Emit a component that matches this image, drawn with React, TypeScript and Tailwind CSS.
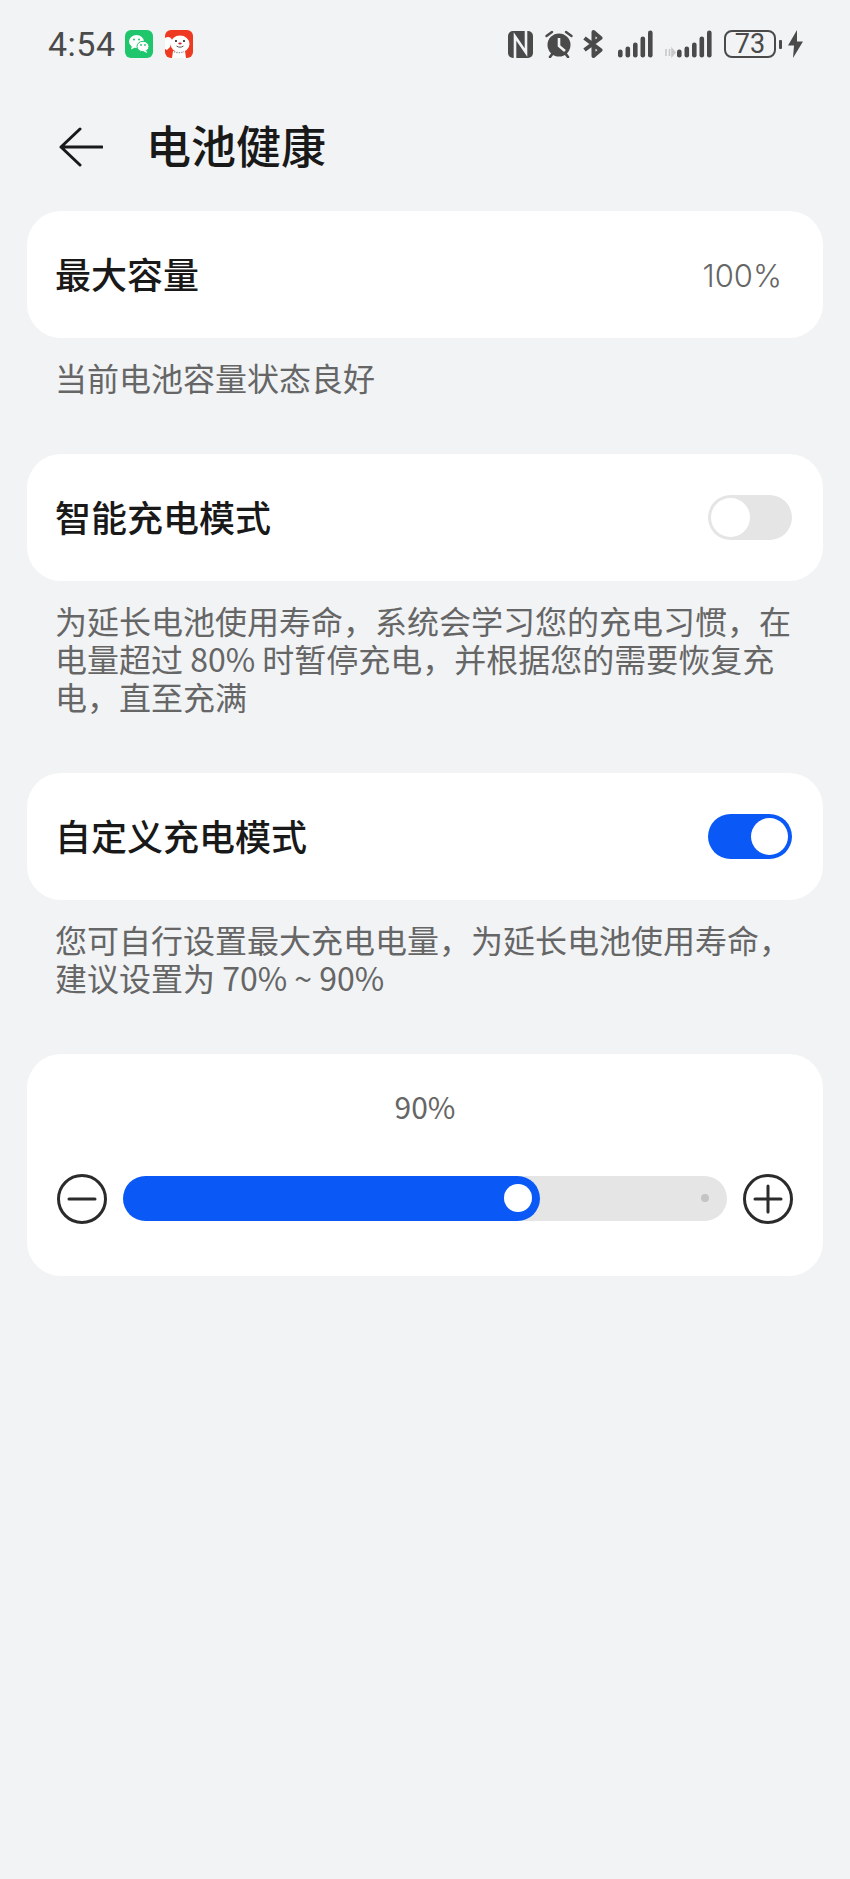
const font = "font-['Noto_Sans_CJK_SC','Noto_Sans',sans-serif]";

function WeChatIcon() {
  return (
    <svg width="28" height="28" viewBox="0 0 28 28">
      <rect width="28" height="28" rx="6" fill="#1fc66b" />
      <ellipse cx="11.5" cy="11.5" rx="7.5" ry="6.5" fill="#fff" />
      <path d="M7 16l-1 3.5 4-2z" fill="#fff" />
      <ellipse cx="18" cy="16.5" rx="6" ry="5.2" fill="#fff" stroke="#1fc66b" strokeWidth="1" />
      <path d="M21 20.5l1.5 2.5-4-1.5z" fill="#fff" />
      <circle cx="9" cy="9.5" r="1" fill="#1fc66b" />
      <circle cx="14" cy="9.5" r="1" fill="#1fc66b" />
      <circle cx="16" cy="15" r="0.9" fill="#1fc66b" />
      <circle cx="20" cy="15" r="0.9" fill="#1fc66b" />
    </svg>
  );
}

function DogIcon() {
  return (
    <svg width="28" height="28" viewBox="0 0 28 28">
      <rect width="28" height="28" rx="6" fill="#ee3a22" />
      <ellipse cx="15" cy="14" rx="9.5" ry="8.5" fill="#fff" />
      <path d="M0 8c3-2 6-1 7 2l-2 7-3 3-2-1z" fill="#fff" />
      <path d="M8 21h12l1 7H7z" fill="#fff" />
      <path d="M9 21.5c3 1.5 7 1.5 10 0" fill="none" stroke="#999" strokeWidth="1.4" strokeDasharray="1.4 1" />
      <circle cx="11" cy="11" r="1.1" fill="#222" />
      <circle cx="19" cy="11" r="1.1" fill="#222" />
      <ellipse cx="15" cy="13.5" rx="1.7" ry="1.1" fill="#d8202a" />
      <path d="M11.5 16c2 1.6 5 1.6 7 0" fill="none" stroke="#555" strokeWidth="1" />
    </svg>
  );
}

function NfcIcon() {
  return (
    <svg width="25" height="27" viewBox="0 0 25 27">
      <rect width="25" height="27" rx="5" fill="#4a4a4a" />
      <path d="M7 27V5.500l11 16V0" stroke="#f1f3f5" strokeWidth="2.6" fill="none" />
    </svg>
  );
}

function AlarmIcon() {
  return (
    <svg width="28" height="28" viewBox="0 0 28 28">
      <circle cx="14" cy="15" r="11.500" fill="#4a4a4a" />
      <path d="M14 8v8l6 5" fill="none" stroke="#f1f3f5" strokeWidth="2.6" />
      <path d="M1.500 6L7 2M26.500 6L21 2" stroke="#4a4a4a" strokeWidth="2.400" strokeLinecap="round" />
      <path d="M5 27l3-4M23 27l-3-4" stroke="#4a4a4a" strokeWidth="2.6" strokeLinecap="round" />
    </svg>
  );
}

function BluetoothIcon() {
  return (
    <svg width="20" height="28" viewBox="0 0 20 28">
      <path d="M1.500 8l16 12-7 6V2l7 6-16 12" fill="none" stroke="#4a4a4a" strokeWidth="4" strokeLinejoin="round" />
    </svg>
  );
}

function SignalBars() {
  const bars = [
    { x: 0, h: 8 },
    { x: 7.5, h: 11 },
    { x: 15, h: 15 },
    { x: 22.5, h: 21 },
    { x: 30, h: 27 },
  ];
  return (
    <svg width="35" height="28" viewBox="0 0 35 28">
      {bars.map((bar) => (
        <rect key={bar.x} x={bar.x} y={27.5 - bar.h} width="4.6" height={bar.h} rx="2.3" fill="#4a4a4a" />
      ))}
    </svg>
  );
}

function BoltIcon() {
  return (
    <svg width="15" height="28" viewBox="0 0 15 28">
      <path d="M9 0L0 15.500h6L5 28l10-16.500H9z" fill="#4a4a4a" />
    </svg>
  );
}

function StatusBar() {
  return (
    <div className="flex h-[88px] items-center pl-[48px]">
      <span className="w-[77px] font-['Roboto',sans-serif] text-[34px] leading-none tracking-[0.5px] text-[#4a4a4a]">4:54</span>
      <WeChatIcon />
      <div className="ml-[12px]">
        <DogIcon />
      </div>
      <div className="ml-[315px]">
        <NfcIcon />
      </div>
      <div className="ml-[12px]">
        <AlarmIcon />
      </div>
      <div className="ml-[10px]">
        <BluetoothIcon />
      </div>
      <div className="ml-[15px]">
        <SignalBars />
      </div>
      <div className="ml-[11px] flex items-center">
        <svg width="13" height="28" viewBox="0 0 13 28">
          <path d="M2 19v7M5.500 19v7M8 19l3 3.500-3 3.500z" stroke="#c8c8c8" strokeWidth="1.6" fill="#c8c8c8" />
        </svg>
        <SignalBars />
      </div>
      <div className="ml-[12px] flex h-[28px] w-[52px] items-center justify-center rounded-[8px] border-2 border-[#4a4a4a] font-['Roboto',sans-serif] text-[27px] leading-none text-[#4a4a4a]">
        73
      </div>
      <div className="ml-[3px] h-[9px] w-[3px] rounded-[1px] bg-[#4a4a4a]" />
      <div className="ml-[6px]">
        <BoltIcon />
      </div>
    </div>
  );
}

function Toggle({ on }: { on: boolean }) {
  return (
    <div className={on ? "flex h-[45px] w-[84px] justify-end rounded-full bg-[#0a59f7] p-[4px]" : "flex h-[45px] w-[84px] rounded-full bg-[#e5e5e5] p-[3px]"}>
      <div className={on ? "size-[37px] rounded-full bg-white" : "size-[39px] rounded-full bg-white"} />
    </div>
  );
}

function Row({ title, children }: { title: string; children: React.ReactNode }) {
  return (
    <div className="flex h-[127px] items-center justify-between rounded-[34px] bg-white pr-[31px] pl-[28px]">
      <span className="pb-[4px] text-[36px] leading-none font-medium text-[#191919]">{title}</span>
      {children}
    </div>
  );
}

function Hint({ lines }: { lines: string[] }) {
  return (
    <p className="mt-[20px] mb-[58px] pl-[28px] text-[32px] leading-[38px] whitespace-pre-line text-[#666666]">
      {lines.join("\n")}
    </p>
  );
}

function RoundIcon({ plus }: { plus?: boolean }) {
  return (
    <svg className="mt-[2px]" width="50" height="50" viewBox="0 0 50 50" fill="none" stroke="#2b2b2b" strokeWidth="3">
      <circle cx="25" cy="25" r="23.500" />
      <path d="M12 25h26" strokeLinecap="round" />
      {plus ? <path d="M25 12v26" strokeLinecap="round" /> : null}
    </svg>
  );
}

export default function App() {
  return (
    <div className={`h-[1879px] w-[850px] overflow-hidden bg-[#f1f3f5] ${font}`}>
      <StatusBar />
      <div className="flex h-[118px] items-center pb-[5px] pl-[59px]">
        <svg className="mt-[4px]" width="44" height="40" viewBox="0 0 44 40" fill="none" stroke="#191919" strokeWidth="3" strokeLinecap="round" strokeLinejoin="round">
          <path d="M21 2L2 20l19 18M2 20h41" />
        </svg>
        <h1 className="ml-[43px] text-[45px] leading-none font-medium text-[#191919]">电池健康</h1>
      </div>
      <div className="mt-[5px] px-[27px]">
        <Row title="最大容量">
          <span className="pt-[2px] pr-[10px] font-['Inter',sans-serif] text-[31px] leading-none font-light text-[#666666]">100%</span>
        </Row>
        <Hint lines={["当前电池容量状态良好"]} />
        <Row title="智能充电模式">
          <Toggle on={false} />
        </Row>
        <Hint lines={["为延长电池使用寿命，系统会学习您的充电习惯，在", "电量超过 80% 时暂停充电，并根据您的需要恢复充", "电，直至充满"]} />
        <Row title="自定义充电模式">
          <Toggle on={true} />
        </Row>
        <Hint lines={["您可自行设置最大充电电量，为延长电池使用寿命，", "建议设置为 70% ~ 90%"]} />
        <div className="h-[222px] rounded-[34px] bg-white px-[30px] pt-[33px]">
          <p className="text-center text-[30px] leading-[38px] text-[#666666]">90%</p>
          <div className="mt-[47px] flex items-center gap-[16px]">
            <RoundIcon />
            <div className="relative h-[45px] w-[604px] rounded-full bg-[#e5e5e5]">
              <div className="h-full w-[417px] rounded-full bg-[#0a59f7]" />
              <div className="absolute top-[8.500px] left-[381px] size-[28px] rounded-full bg-white" />
              <div className="absolute top-[18.500px] left-[578px] size-[8px] rounded-full bg-[#c4c4c4]" />
            </div>
            <RoundIcon plus />
          </div>
        </div>
      </div>
    </div>
  );
}
